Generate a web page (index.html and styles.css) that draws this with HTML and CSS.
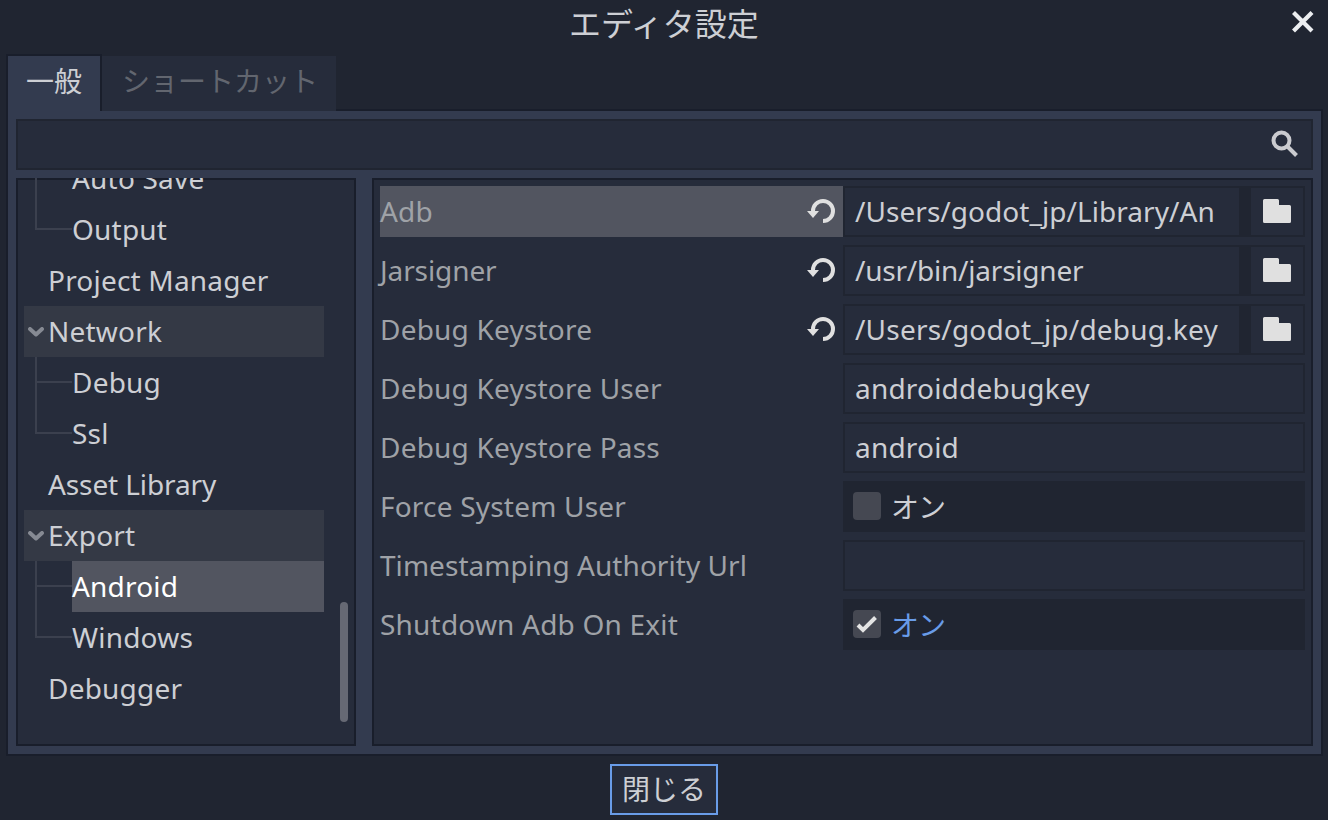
FILE: index.html
```html
<!DOCTYPE html>
<html lang="ja">
<head>
<meta charset="utf-8">
<title>エディタ設定</title>
<link rel="stylesheet" href="styles.css">
</head>
<body>
<svg class="defs" width="0" height="0">
  <symbol id="revert" viewBox="0 0 28 26"><path d="M6 13.500V12a10 10 0 1 1 10 10" fill="none" stroke="#e0e0e0" stroke-width="4"/><path d="M0 12h12l-6 7z" fill="#e0e0e0"/></symbol>
  <symbol id="folder" viewBox="0 0 28 24"><path d="M1.500 0H14.500Q16 0 16 1.500V6H26.500Q28 6 28 7.500V22.500Q28 24 26.500 24H1.500Q0 24 0 22.500V1.500Q0 0 1.500 0z" fill="#e0e0e0"/></symbol>
  <symbol id="chevron" viewBox="0 0 16 10"><path d="M2 2l6 5.500L14 2" fill="none" stroke="#868a93" stroke-width="4" stroke-linecap="round" stroke-linejoin="round"/></symbol>
</svg>
<div class="dialog">
  <header class="titlebar">
    <h1 class="title">エディタ設定</h1>
    <svg class="close" viewBox="0 0 24 24"><path d="M2.500 2.500l18.500 18.500M21 2.500l-18.500 18.500" stroke="#eceef0" stroke-width="4.200"/></svg>
  </header>
  <nav class="tabs">
    <div class="tab active">一般</div>
    <div class="tab">ショートカット</div>
  </nav>
  <main class="panel">
    <div class="search"><svg class="lens" viewBox="0 0 28 28"><circle cx="10.500" cy="10.500" r="8" fill="none" stroke="#cacbcf" stroke-width="4"/><path d="M16.500 16.500l9 9" stroke="#cacbcf" stroke-width="4"/></svg></div>
    <div class="columns">
      <aside class="tree">
        <div class="items">
          <div class="item child">Auto Save</div>
          <div class="item child last">Output</div>
          <div class="item">Project Manager</div>
          <div class="item section"><svg class="chevron"><use href="#chevron"/></svg>Network</div>
          <div class="item child">Debug</div>
          <div class="item child last">Ssl</div>
          <div class="item tight">Asset Library</div>
          <div class="item section"><svg class="chevron"><use href="#chevron"/></svg>Export</div>
          <div class="item child selected"><span>Android</span></div>
          <div class="item child last">Windows</div>
          <div class="item">Debugger</div>
        </div>
        <div class="scrollbar"></div>
      </aside>
      <section class="inspector">
        <div class="row current"><div class="label">Adb<svg class="revert"><use href="#revert"/></svg></div><div class="value path"><div class="field snug">/Users/godot_jp/Library/An</div><div class="browse"><svg class="folder"><use href="#folder"/></svg></div></div></div>
        <div class="row"><div class="label tight">Jarsigner<svg class="revert"><use href="#revert"/></svg></div><div class="value path"><div class="field tighter">/usr/bin/jarsigner</div><div class="browse"><svg class="folder"><use href="#folder"/></svg></div></div></div>
        <div class="row"><div class="label">Debug Keystore<svg class="revert"><use href="#revert"/></svg></div><div class="value path"><div class="field">/Users/godot_jp/debug.key</div><div class="browse"><svg class="folder"><use href="#folder"/></svg></div></div></div>
        <div class="row"><div class="label">Debug Keystore User</div><div class="value"><div class="field">androiddebugkey</div></div></div>
        <div class="row"><div class="label">Debug Keystore Pass</div><div class="value"><div class="field">android</div></div></div>
        <div class="row"><div class="label">Force System User</div><div class="value toggle"><span class="box"></span><span class="state">オン</span></div></div>
        <div class="row"><div class="label snug">Timestamping Authority Url</div><div class="value"><div class="field"></div></div></div>
        <div class="row"><div class="label">Shutdown Adb On Exit</div><div class="value toggle on"><span class="box"><svg class="check" viewBox="0 0 28 28"><path d="M5 15l5 5L22.500 7.500" fill="none" stroke="#e4e4e4" stroke-width="4"/></svg></span><span class="state">オン</span></div></div>
      </section>
    </div>
  </main>
  <footer class="footer"><button class="ok">閉じる</button></footer>
</div>
</body>
</html>
```
FILE: styles.css
```css
* { box-sizing: border-box; }
body { margin: 0; }
svg { display: block; flex: none; }
.defs { position: absolute; }
.dialog {
  width: 1328px; height: 820px; overflow: hidden;
  display: flex; flex-direction: column;
  background: #202531; color: #cdcfd4;
  font: 28px/51px "Noto Sans", "Noto Sans CJK JP", sans-serif;
  white-space: nowrap;
}
.titlebar { height: 54px; display: grid; grid-template-columns: 1fr auto 1fr; padding-right: 13px; }
.title { grid-column: 2; margin: 0 0 0 13px; font-size: 32px; font-weight: 400; line-height: 47px; }
.close { width: 24px; height: 24px; justify-self: end; margin-top: 10px; }
.tabs { display: flex; height: 57px; padding-left: 6px; position: relative; z-index: 1; }
.tab { height: 55px; margin-top: 2px; width: 234px; padding-left: 20px; background: #262c3b; color: #62666f; line-height: 51px; }
.tab.active { height: 57px; margin-top: 0; width: 96px; padding-left: 18px; background: #333b4f; color: #cdcfd4; border: 2px solid #191e2b; border-bottom: 0; }
.panel {
  width: 1317px; height: 647px; margin: -2px 0 0 6px; padding: 8px;
  border: 2px solid #191e2b; background: #333b4f;
  display: flex; flex-direction: column; gap: 8px;
}
.search { height: 51px; border: 2px solid #202531; background: #262c3b; display: flex; justify-content: flex-end; padding: 9px 12px 0 0; }
.lens { width: 28px; height: 28px; }
.columns { flex: 1; display: flex; gap: 16px; min-height: 0; }
.tree { width: 340px; background: #262c3b; box-shadow: inset 0 0 0 2px #191e2b; display: flex; padding: 0 8px; overflow: hidden; letter-spacing: .2px; }
.items { width: 300px; margin-top: -25px; }
.item { height: 51px; padding-left: 24px; position: relative; }
.section { background: #343945; }
.chevron { position: absolute; left: 4px; top: 21px; width: 16px; height: 10px; }
.child { padding-left: 48px; }
.child::before { content: ""; position: absolute; left: 11px; top: 0; width: 2px; height: 51px; background: #3b404e; }
.child.last::before { height: 26px; }
.child::after { content: ""; position: absolute; left: 11px; top: 24px; width: 37px; height: 2px; background: #3b404e; }
.child:first-child::after { display: none; }
.selected span { display: block; background: #525560; color: #fff; }
.scrollbar { width: 8px; height: 120px; border-radius: 4px; background: #666974; margin: 424px 0 0 16px; }
.inspector { flex: 1; border: 2px solid #191e2b; background: #262c3b; padding: 6px; display: flex; flex-direction: column; gap: 8px; letter-spacing: .2px; }
.tight { letter-spacing: -.1px; }
.tighter { letter-spacing: -.22px; }
.snug { letter-spacing: .05px; }
.row { height: 51px; display: grid; grid-template-columns: 463px 1fr; }
.label { display: flex; justify-content: space-between; color: #9fa2a7; padding-right: 8px; }
.current .label { background: #525560; }
.revert { width: 28px; height: 26px; margin-top: 13px; }
.value { display: flex; min-width: 0; }
.field { flex: 1; border: 2px solid #202531; background: #262c3b; line-height: 47px; padding-left: 10px; overflow: hidden; }
.path { background: #202531; gap: 10px; }
.browse { width: 54px; background: #262c3b; border: 2px solid #202531; border-left: 0; padding: 11px 0 0 12px; }
.folder { width: 28px; height: 24px; }
.toggle { background: #202531; padding: 11px 0 0 10px; gap: 10px; }
.box { width: 28px; height: 28px; border-radius: 4px; background: #454852; }
.state { line-height: 31px; letter-spacing: -1px; }
.on { color: #699ce8; }
.footer { display: flex; justify-content: center; padding-top: 8px; }
.ok { width: 108px; height: 51px; border: 2px solid #699ce8; background: #262c3b; color: inherit; font: inherit; line-height: 47px; padding: 0; }
```
